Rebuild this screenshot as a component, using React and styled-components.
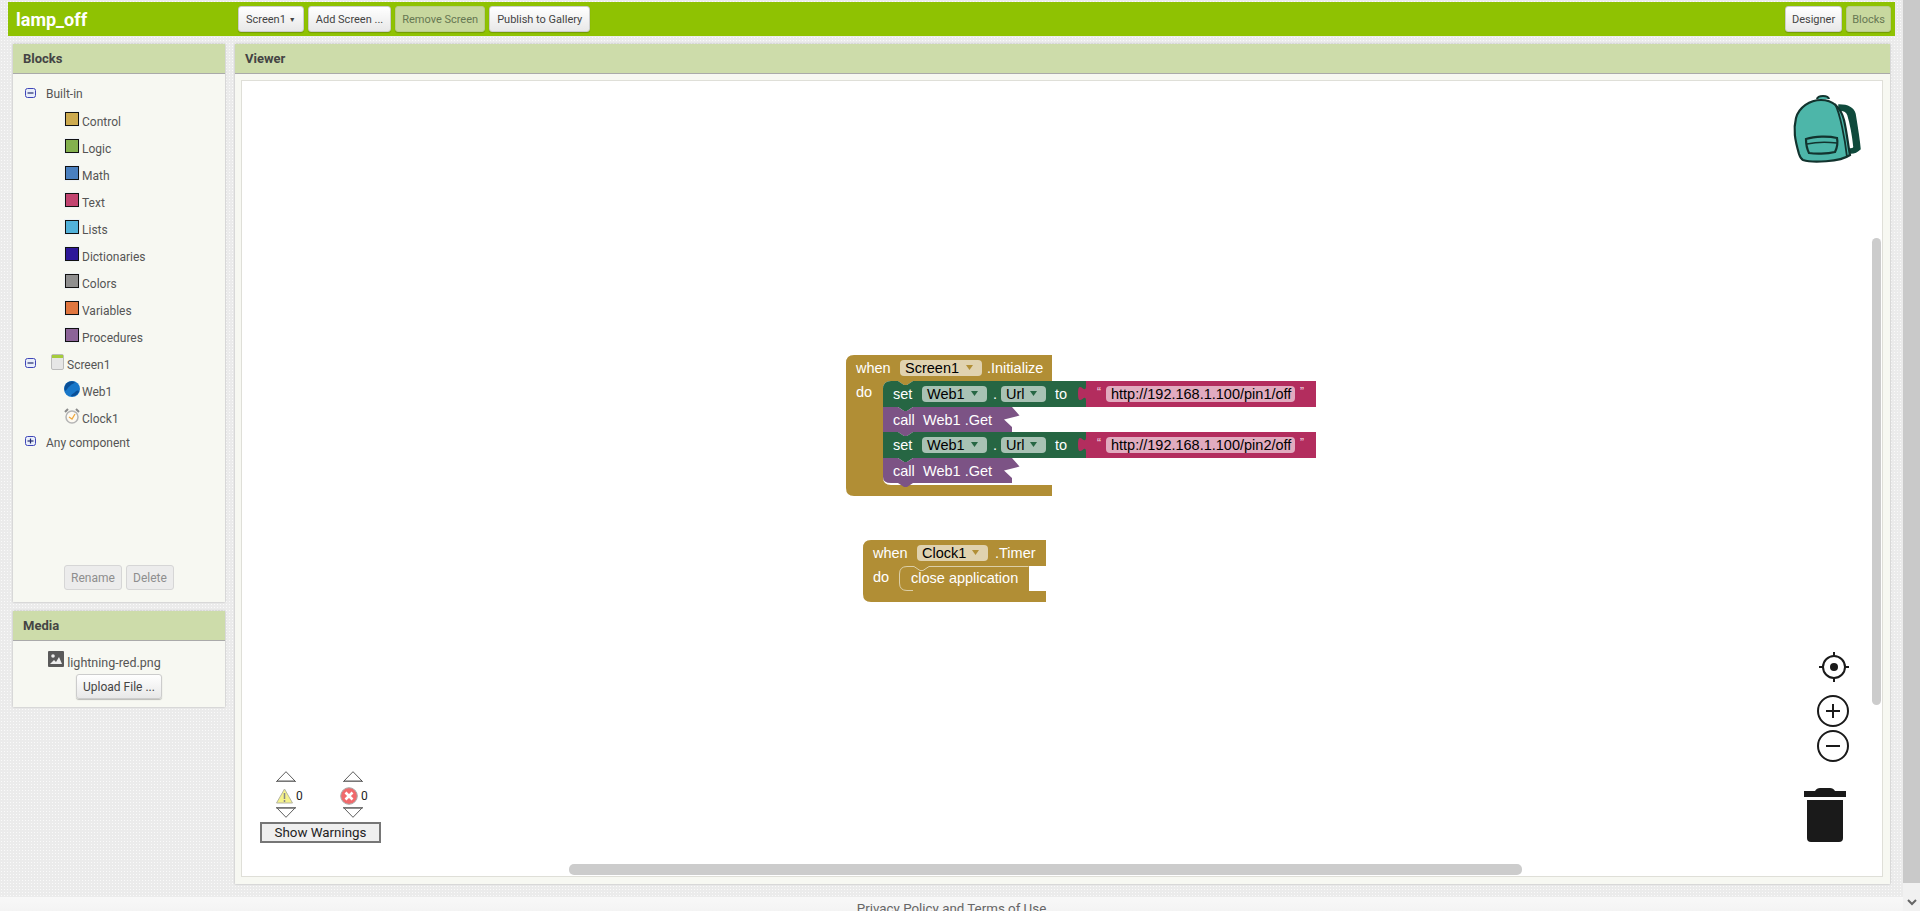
import React from 'react'
import styled, { createGlobalStyle } from 'styled-components'

const GlobalStyle = createGlobalStyle`
  html, body {
    margin: 0;
    height: 100%;
    overflow: hidden;
    font-family: Roboto, "Liberation Sans", sans-serif;
  }
`

const Window = styled.div`
  display: flex;
  height: 100vh;
`

const Page = styled.div`
  flex: 1;
  min-width: 0;
  overflow: hidden;
  background-color: #ebebeb;
  background-image: radial-gradient(#fafafa 0.9px, transparent 1px);
  background-size: 3px 3px;
`

const PageScrollbar = styled.div`
  width: 17px;
  display: flex;
  flex-direction: column;
  background: #f1f1f1;
`

const ScrollThumb = styled.div`
  height: 883px;
  background: #c9c9c9;
`

const ScrollArrow = styled.div`
  flex: 1;
  display: flex;
  align-items: center;
  justify-content: center;
  padding-top: 11px;
`

const TopBar = styled.div`
  display: flex;
  align-items: center;
  gap: 4px;
  height: 34px;
  margin: 2px 8px 0;
  background: #8fc202;
`

const Title = styled.div`
  width: 226px;
  padding-left: 8px;
  box-sizing: border-box;
  color: white;
  font-size: 18px;
  font-weight: bold;
`

const Button = styled.button`
  height: 26px;
  padding: 0 ${props => props.$pad || 7}px;
  box-sizing: border-box;
  border: 1px solid #ccc;
  border-radius: 3px;
  font-family: Roboto, sans-serif;
  font-size: 11px;
  color: #444;
  white-space: nowrap;
  background: linear-gradient(#ffffff, #e8e8e8);
  box-shadow: 0 1px 1px rgba(0, 0, 0, 0.2);
  ${props => props.$off && `
    background: #c8d89f;
    border-color: #b9cc8d;
    color: #667752;
  `}
  ${props => props.$push && 'margin-left: auto;'}
  ${props => props.$last && 'margin-right: 4px;'}
`

const Arrow = styled.span`
  display: inline-block;
  margin-left: 3px;
  font-size: 7px;
  vertical-align: 1px;
`

const Content = styled.div`
  display: flex;
  gap: 10px;
  height: 840px;
  margin: 8px 13px 0;
`

const Sidebar = styled.div`
  width: 212px;
  display: flex;
  flex-direction: column;
  gap: 9px;
`

const Panel = styled.div`
  display: flex;
  flex-direction: column;
  box-sizing: border-box;
  background: #f7f8f2;
  box-shadow: 0 0 2px rgba(0, 0, 0, 0.25);
  ${props => props.$height && `height: ${props.$height}px;`}
  ${props => props.$grow && 'flex: 1; min-width: 0;'}
`

const PanelHeader = styled.div`
  height: 30px;
  flex: none;
  display: flex;
  align-items: center;
  padding-left: 10px;
  box-sizing: border-box;
  background: #cddcaa;
  border-bottom: 1px solid #aaa;
  color: #444;
  font-size: 13px;
  font-weight: bold;
`

const Tree = styled.div`
  flex: 1;
  padding-top: 6px;
`

const Row = styled.div`
  display: flex;
  align-items: center;
  height: ${props => props.$height || 27}px;
  padding-left: ${props => props.$indent}px;
  color: #555;
  font-size: 12px;
`

const Toggle = styled.svg`
  width: 11px;
  height: 10px;
  margin: -3px ${props => props.$gap}px 0 0;
  flex: none;
`

const Swatch = styled.span`
  width: 14px;
  height: 14px;
  margin: -5px 3px 0 0;
  box-sizing: border-box;
  border: 1px solid #111;
  outline: 1px solid #eef2f5;
  background: ${props => props.$color};
`

const TreeIcon = styled.svg`
  width: ${props => props.$size}px;
  height: 16px;
  margin: -6px ${props => props.$gap}px 0 ${props => props.$shift || 0}px;
  flex: none;
`

const PanelActions = styled.div`
  display: flex;
  justify-content: center;
  gap: 4px;
  padding-bottom: 12px;
`

const GreyButton = styled.button`
  height: 25px;
  padding: 0;
  width: ${props => props.$width}px;
  border: 1px solid #d6d6d6;
  border-radius: 3px;
  background: #ececec;
  color: #8e8e8e;
  font-family: Roboto, sans-serif;
  font-size: 12px;
`

const MediaBody = styled.div`
  flex: 1;
  display: flex;
  flex-direction: column;
  align-items: center;
  padding-top: 9px;
`

const MediaFile = styled.div`
  display: flex;
  align-items: center;
  height: 24px;
  margin-right: 29px;
  color: #555;
  font-size: 12.5px;
`

const MediaIcon = styled.svg`
  width: 16px;
  height: 16px;
  margin: -6px 3px 0 0;
`

const UploadButton = styled.button`
  width: 86px;
  height: 25px;
  padding: 0;
  border: 1px solid #ccc;
  border-radius: 3px;
  background: linear-gradient(#ffffff, #e8e8e8);
  box-shadow: 0 1px 1px rgba(0, 0, 0, 0.25);
  color: #444;
  font-family: Roboto, sans-serif;
  font-size: 12px;
`

const ViewerBody = styled.div`
  flex: 1;
  display: flex;
  padding: 6px 7px 7px 6px;
`

const Workspace = styled.div`
  position: relative;
  flex: 1;
  overflow: hidden;
  background: white;
  border: 1px solid #dfdfd8;
`

const BlockStack = styled.svg`
  position: absolute;
  left: ${props => props.$left}px;
  top: ${props => props.$top}px;
`

const BlockText = styled.text`
  font-family: "Liberation Sans", Arial, sans-serif;
  font-size: 14.5px;
  fill: ${props => props.$dark ? '#000' : '#fff'};
`

const QuoteMark = styled(BlockText)`
  font-size: 12px;
  fill: #f3d9e3;
`

const Backpack = styled.svg`
  position: absolute;
  left: 1543px;
  top: 4px;
  width: 85px;
  height: 85px;
`

const LocateIcon = styled.svg`
  position: absolute;
  left: 1574px;
  top: 568px;
  width: 36px;
  height: 36px;
`

const ZoomIcon = styled.svg`
  position: absolute;
  left: 1573px;
  top: ${props => props.$top}px;
  width: 36px;
  height: 36px;
`

const TrashIcon = styled.svg`
  position: absolute;
  left: 1562px;
  top: 707px;
  width: 42px;
  height: 54px;
`

const VScroll = styled.div`
  position: absolute;
  left: 1630px;
  top: 157px;
  width: 9px;
  height: 467px;
  border-radius: 5px;
  background: #ccc;
`

const HScroll = styled.div`
  position: absolute;
  left: 327px;
  top: 783px;
  width: 953px;
  height: 11px;
  border-radius: 5px;
  background: #ccc;
`

const Indicator = styled.div`
  position: absolute;
  left: 18px;
  top: 690px;
  width: 121px;
`

const Counts = styled.div`
  display: flex;
  gap: 47px;
  padding-left: 16px;
  height: 51px;
`

const CountColumn = styled.div`
  width: 20px;
  display: flex;
  flex-direction: column;
  gap: 4.5px;
`

const CountRow = styled.div`
  display: flex;
  align-items: center;
  gap: 3px;
  height: 16px;
  margin: 1px 0 -1px ${props => props.$shift || 0}px;
  color: #222;
  font-family: Roboto, sans-serif;
  font-size: 12px;
  svg {
    flex: none;
  }
`

const Triangle = styled.svg`
  display: block;
  width: 20px;
  height: 11px;
`

const ShowWarnings = styled.button`
  display: block;
  width: 121px;
  height: 21px;
  padding: 0;
  box-sizing: border-box;
  border: 2px solid #767676;
  background: #efefef;
  color: #222;
  font-family: Roboto, sans-serif;
  font-size: 13.33px;
`

const Footer = styled.div`
  margin-top: 13px;
  height: 40px;
  padding-top: 4px;
  box-sizing: border-box;
  text-align: center;
  background: linear-gradient(#f8f8f8, #ececec);
  color: #666;
  font-size: 13.33px;
`

const categories = [
  ['Control', '#ccaa4f'],
  ['Logic', '#84b14e'],
  ['Math', '#4a80c0'],
  ['Text', '#c24470'],
  ['Lists', '#52b2da'],
  ['Dictionaries', '#2d1799'],
  ['Colors', '#8f8f8f'],
  ['Variables', '#e07640'],
  ['Procedures', '#8c6498'],
]

const ToggleBox = ({ open, gap }) => (
  <Toggle $gap={gap} viewBox="0 0 11 10">
    <rect x="0.5" y="0.5" width="10" height="9" rx="2" fill="#e8eefa" stroke="#3f46b8" />
    <path d="M2.5 5h6" stroke="#222a70" strokeWidth="1.2" />
    {!open && <path d="M5.5 2.5v5" stroke="#222a70" strokeWidth="1.2" />}
  </Toggle>
)

const Field = ({ x, y, w, label, pale, arrow }) => (
  <g>
    <rect x={x} y={y} width={w} height="16" rx="4" fill={pale} />
    <BlockText $dark x={x + 5} y={y + 13}>{label}</BlockText>
    {arrow && <path d={`M${x + w - 16} ${y + 5}h7l-3.500 5z`} fill={arrow} />}
  </g>
)

const setPath = (top, rounded) => `M37,${top + 8} ${rounded ? `Q37,${top} 45,${top}` : `V${top} H45`} H52 l6,4 3,0 6,-4 H240 V${top + 26} H67 l-6,4 -3,0 -6,-4 H37 Z`

const callPath = (top, last) => `M37,${top} H52 l6,4 3,0 6,-4 H166 L173.5,${top + 8.5} L158,${top + 12.5} L166,${top + 20} V${top + 25} H67 l-6,4 -3,0 -6,-4 H${last ? 45 : 37} ${last ? `Q37,${top + 25} 37,${top + 19}` : ''} Z`

const stringPath = top => `M240,${top} H470 V${top + 26} H240 V${top + 20} c0,-10 -8,8 -8,-7.5 s8,2.5 8,-7.5 Z`

const SetUrl = ({ top, rounded, url }) => (
  <g>
    <path d={setPath(top, rounded)} fill="#266643" />
    <path d={stringPath(top)} fill="#b32d5e" />
    <BlockText x="47" y={top + 18}>set</BlockText>
    <Field x={76} y={top + 5} w={65} label="Web1" pale="#a8c2b4" arrow="#266643" />
    <BlockText x="147" y={top + 18}>.</BlockText>
    <Field x={155} y={top + 5} w={45} label="Url" pale="#a8c2b4" arrow="#266643" />
    <BlockText x="209" y={top + 18}>to</BlockText>
    <QuoteMark x="251" y={top + 15}>“</QuoteMark>
    <Field x={260} y={top + 5} w={189} label={url} pale="#e1abbf" />
    <QuoteMark x="454" y={top + 15}>”</QuoteMark>
  </g>
)

const CallGet = ({ top, last }) => (
  <g>
    <path d={callPath(top, last)} fill="#7c5385" />
    <BlockText x="47" y={top + 18}>call</BlockText>
    <BlockText x="77" y={top + 18}>Web1 .Get</BlockText>
  </g>
)

const InitializeBlock = () => (
  <BlockStack $left={604} $top={274} width="472" height="145" viewBox="0 0 472 145">
    <path
      d="M0,8 Q0,0 8,0 H206 V26 H67 l-6,4 -3,0 -6,-4 H45 Q37,26 37,34 V122 Q37,130 45,130 H206 V141 H8 Q0,141 0,133 Z"
      fill="#b18e35"
    />
    <BlockText x="10" y="18">when</BlockText>
    <Field x={54} y={5} w={82} label="Screen1" pale="#e0d2af" arrow="#b18e35" />
    <BlockText x="141" y="18">.Initialize</BlockText>
    <BlockText x="10" y="42">do</BlockText>
    <SetUrl top={26} rounded url="http://192.168.1.100/pin1/off" />
    <CallGet top={52} />
    <SetUrl top={77} url="http://192.168.1.100/pin2/off" />
    <CallGet top={103} last />
  </BlockStack>
)

const TimerBlock = () => (
  <BlockStack $left={621} $top={459} width="184" height="63" viewBox="0 0 184 63">
    <path
      d="M0,8 Q0,0 8,0 H183 V26 H166 V51 H183 V62 H8 Q0,62 0,54 Z"
      fill="#b18e35"
    />
    <path
      d="M165.5,26.5 H66 l-6,4 -3,0 -6,-4 H44 Q36.5,26.500 36.5,34 V43 Q36.5,50.500 44,50.500 H50"
      fill="none"
      stroke="#dccfa8"
    />
    <BlockText x="10" y="18">when</BlockText>
    <Field x={54} y={5} w={71} label="Clock1" pale="#e0d2af" arrow="#b18e35" />
    <BlockText x="132" y="18">.Timer</BlockText>
    <BlockText x="10" y="42">do</BlockText>
    <BlockText x="48" y="43">close application</BlockText>
  </BlockStack>
)

const App = () => (
  <Window>
    <GlobalStyle />
    <Page>
      <TopBar>
        <Title>lamp_off</Title>
        <Button>Screen1<Arrow>▼</Arrow></Button>
        <Button>Add Screen ...</Button>
        <Button $off $pad={6}>Remove Screen</Button>
        <Button>Publish to Gallery</Button>
        <Button $push $pad={6}>Designer</Button>
        <Button $off $last $pad={5}>Blocks</Button>
      </TopBar>
      <Content>
        <Sidebar>
          <Panel $height={558}>
            <PanelHeader>Blocks</PanelHeader>
            <Tree>
              <Row $indent={12} $height={28}>
                <ToggleBox open gap={10} />
                Built-in
              </Row>
              {categories.map(([name, color]) => (
                <Row key={name} $indent={52}>
                  <Swatch $color={color} />
                  {name}
                </Row>
              ))}
              <Row $indent={12}>
                <ToggleBox open gap={15} />
                <TreeIcon $size={13} $gap={3} viewBox="0 0 13 16">
                  <rect x="0.5" y="0.5" width="12" height="15" rx="1.5" fill="#e6e6e6" stroke="#bbb" />
                  <rect x="1" y="1" width="11" height="3" fill="#a5cc3c" />
                </TreeIcon>
                Screen1
              </Row>
              <Row $indent={51}>
                <TreeIcon $size={16} $gap={2} viewBox="0 0 16 16">
                  <circle cx="8" cy="8" r="8" fill="#1877c9" />
                  <path d="M1 10c2-1 3-4 5-5 1-2 4-2 5-4-3-1.500-7-.5-9 2-1.500 2-2 5-1 7zM7 15c1-3 3-2 4-4 1-1 3-2 4-1-.5 3-4 6-8 5z" fill="#0a4f96" />
                </TreeIcon>
                Web1
              </Row>
              <Row $indent={51}>
                <TreeIcon $size={16} $gap={2} viewBox="0 0 16 16">
                  <path d="M1 4l3-3M15 4l-3-3" stroke="#8a8a8a" strokeWidth="2" />
                  <circle cx="8" cy="9" r="6" fill="#fdfaf2" stroke="#b5b5b5" strokeWidth="1.500" />
                  <path d="M5 9l3 2 3-5" fill="none" stroke="#efa93f" strokeWidth="1.300" />
                </TreeIcon>
                Clock1
              </Row>
              <Row $indent={12} $height={21}>
                <ToggleBox gap={10} />
                Any component
              </Row>
            </Tree>
            <PanelActions>
              <GreyButton $width={58}>Rename</GreyButton>
              <GreyButton $width={48}>Delete</GreyButton>
            </PanelActions>
          </Panel>
          <Panel $height={96}>
            <PanelHeader>Media</PanelHeader>
            <MediaBody>
              <MediaFile>
                <MediaIcon viewBox="0 0 16 16">
                  <rect width="16" height="16" rx="1" fill="#5a5a5a" />
                  <circle cx="5" cy="5" r="1.800" fill="#eee" />
                  <path d="M2 13l4-4 2 2 3-5 3 7z" fill="#eee" />
                </MediaIcon>
                lightning-red.png
              </MediaFile>
              <UploadButton>Upload File ...</UploadButton>
            </MediaBody>
          </Panel>
        </Sidebar>
        <Panel $grow>
          <PanelHeader>Viewer</PanelHeader>
          <ViewerBody>
            <Workspace>
              <InitializeBlock />
              <TimerBlock />
              <Backpack viewBox="0 0 85 85">
                <path d="M54 20C62 20 68 22 70 29C72 41 74 53 75 64C72 67 69 68 66 68L64 64C67 64 69 63 69 62C68 52 66 40 63 30C62 27 59 25 54 25Z" fill="#0f4a3c" stroke="#0f4a3c" strokeWidth="1.500" />
                <path d="M32 14C33 10 43 10 44 14" fill="#4db6a9" stroke="#12332e" strokeWidth="2.200" />
                <path d="M14 69C10 55 8 45 11 33C14 22 25 15 36 15C49 15 56 24 59 35C62 48 63 60 65 70C55 77 27 78 18 75C16 74 15 72 14 69Z" fill="#4db6a9" stroke="#12332e" strokeWidth="2.200" />
                <path d="M50 19C55 28 60 54 62 72" fill="none" stroke="#12332e" strokeWidth="1.800" />
                <path d="M21 54C30 51 44 51 52 53C53 58 52 63 50 67C42 69 30 69 24 68C22 64 21 59 21 54Z" fill="#4db6a9" stroke="#12332e" strokeWidth="2.200" />
                <path d="M22 59C31 57 43 57 52 58" fill="none" stroke="#12332e" strokeWidth="1.600" />
              </Backpack>
              <LocateIcon viewBox="0 0 36 36">
                <circle cx="18" cy="18" r="11" fill="none" stroke="#1a1a1a" strokeWidth="2" />
                <circle cx="18" cy="18" r="4" fill="#1a1a1a" />
                <path d="M18 3v5M18 28v5M3 18h5M28 18h5" stroke="#1a1a1a" strokeWidth="2" />
              </LocateIcon>
              <ZoomIcon $top={612} viewBox="0 0 36 36">
                <circle cx="18" cy="18" r="15" fill="#fff" stroke="#1a1a1a" strokeWidth="2" />
                <path d="M18 11v14M11 18h14" stroke="#1a1a1a" strokeWidth="2" />
              </ZoomIcon>
              <ZoomIcon $top={647} viewBox="0 0 36 36">
                <circle cx="18" cy="18" r="15" fill="#fff" stroke="#1a1a1a" strokeWidth="2" />
                <path d="M11 18h14" stroke="#1a1a1a" strokeWidth="2" />
              </ZoomIcon>
              <TrashIcon viewBox="0 0 42 54">
                <path d="M0 3h11c1-2 3-3 5-3h10c2 0 4 1 5 3h11v6H0z" fill="#1a1a1a" />
                <path d="M3 12h36v38a4 4 0 0 1-4 4H7a4 4 0 0 1-4-4z" fill="#1a1a1a" />
              </TrashIcon>
              <VScroll />
              <HScroll />
              <Indicator>
                <Counts>
                  <CountColumn>
                    <Triangle viewBox="0 0 20 11">
                      <path d="M10 .7L19 10H1z" fill="#fff" stroke="#333" strokeWidth="0.800" />
                      <path d="M0 10h20v1H0z" fill="#777" />
                    </Triangle>
                    <CountRow>
                      <svg width="17" height="16" viewBox="0 0 17 16">
                        <path d="M8.500 1L16.500 15H.5z" fill="#f5f28a" stroke="#b5b5a5" strokeLinejoin="round" />
                        <path d="M8.500 5v6M8.500 12v2" stroke="#888" strokeWidth="1.500" />
                      </svg>
                      0
                    </CountRow>
                    <Triangle viewBox="0 0 20 11">
                      <path d="M10 10.300L19 1H1z" fill="#fff" stroke="#333" strokeWidth="0.800" />
                      <path d="M0 0h20v1.500H0z" fill="#777" />
                    </Triangle>
                  </CountColumn>
                  <CountColumn>
                    <Triangle viewBox="0 0 20 11">
                      <path d="M10 .7L19 10H1z" fill="#fff" stroke="#333" strokeWidth="0.800" />
                      <path d="M0 10h20v1H0z" fill="#777" />
                    </Triangle>
                    <CountRow $shift={-3}>
                      <svg width="18" height="18" viewBox="0 0 18 18">
                        <circle cx="9" cy="9" r="8.300" fill="#f06a6c" stroke="#aaa" />
                        <path d="M5.500 5.500l7 7M12.500 5.500l-7 7" stroke="#fff" strokeWidth="2.600" />
                      </svg>
                      0
                    </CountRow>
                    <Triangle viewBox="0 0 20 11">
                      <path d="M10 10.300L19 1H1z" fill="#fff" stroke="#333" strokeWidth="0.800" />
                      <path d="M0 0h20v1.500H0z" fill="#777" />
                    </Triangle>
                  </CountColumn>
                </Counts>
                <ShowWarnings>Show Warnings</ShowWarnings>
              </Indicator>
            </Workspace>
          </ViewerBody>
        </Panel>
      </Content>
      <Footer>Privacy Policy and Terms of Use</Footer>
    </Page>
    <PageScrollbar>
      <ScrollThumb />
      <ScrollArrow>
        <svg width="10" height="7" viewBox="0 0 10 7">
          <path d="M1 1l4 4 4-4" fill="none" stroke="#666" strokeWidth="2" />
        </svg>
      </ScrollArrow>
    </PageScrollbar>
  </Window>
)

export default App
